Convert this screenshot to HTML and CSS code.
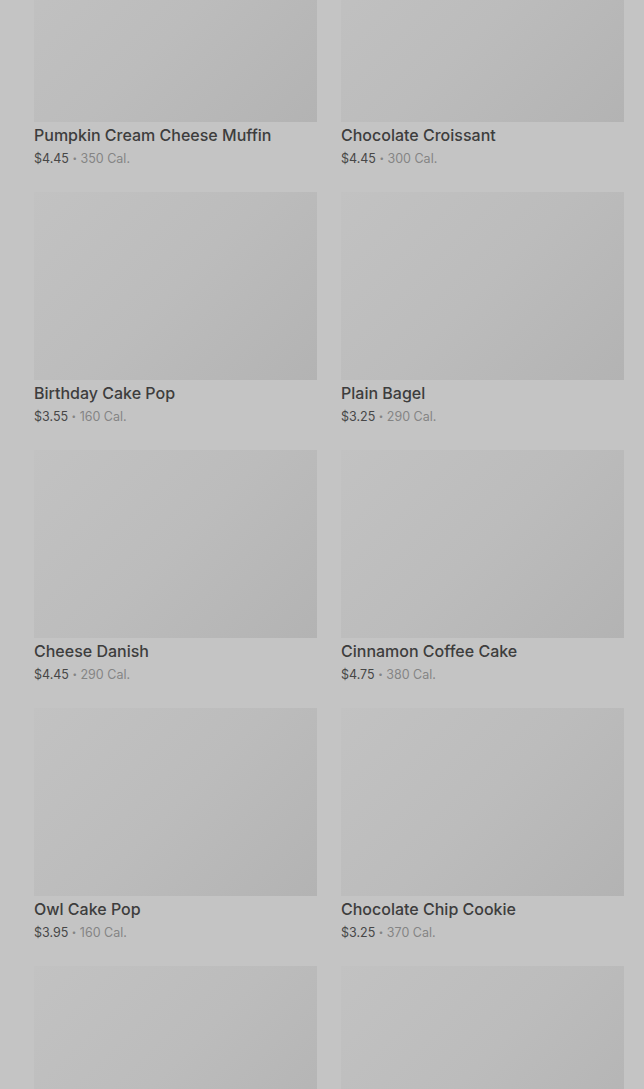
FILE: index.html
```html
<!DOCTYPE html>
<html lang="en">
<head>
    <meta charset="UTF-8">
    <meta name="viewport" content="width=device-width, initial-scale=1.0">
    <title>Bakery Menu</title>
    <link rel="stylesheet" href="styles.css">
</head>
<body>
    <div class="menu-grid">
        <div class="product">
            <div class="product-img"></div>
            <h4 class="product-name">Pumpkin Cream Cheese Muffin</h4>
            <p class="product-meta"><span class="price">$4.45</span> <span class="dot">•</span> <span class="cal">350 Cal.</span></p>
        </div>
        <div class="product">
            <div class="product-img"></div>
            <h4 class="product-name">Chocolate Croissant</h4>
            <p class="product-meta"><span class="price">$4.45</span> <span class="dot">•</span> <span class="cal">300 Cal.</span></p>
        </div>
        <div class="product">
            <div class="product-img"></div>
            <h4 class="product-name">Birthday Cake Pop</h4>
            <p class="product-meta"><span class="price">$3.55</span> <span class="dot">•</span> <span class="cal">160 Cal.</span></p>
        </div>
        <div class="product">
            <div class="product-img"></div>
            <h4 class="product-name">Plain Bagel</h4>
            <p class="product-meta"><span class="price">$3.25</span> <span class="dot">•</span> <span class="cal">290 Cal.</span></p>
        </div>
        <div class="product">
            <div class="product-img"></div>
            <h4 class="product-name">Cheese Danish</h4>
            <p class="product-meta"><span class="price">$4.45</span> <span class="dot">•</span> <span class="cal">290 Cal.</span></p>
        </div>
        <div class="product">
            <div class="product-img"></div>
            <h4 class="product-name">Cinnamon Coffee Cake</h4>
            <p class="product-meta"><span class="price">$4.75</span> <span class="dot">•</span> <span class="cal">380 Cal.</span></p>
        </div>
        <div class="product">
            <div class="product-img"></div>
            <h4 class="product-name">Owl Cake Pop</h4>
            <p class="product-meta"><span class="price">$3.95</span> <span class="dot">•</span> <span class="cal">160 Cal.</span></p>
        </div>
        <div class="product">
            <div class="product-img"></div>
            <h4 class="product-name">Chocolate Chip Cookie</h4>
            <p class="product-meta"><span class="price">$3.25</span> <span class="dot">•</span> <span class="cal">370 Cal.</span></p>
        </div>
        <div class="product">
            <div class="product-img"></div>
        </div>
        <div class="product">
            <div class="product-img"></div>
        </div>
    </div>
</body>
</html>
```

FILE: styles.css
```css
body {
    font-family: Inter, "Liberation Sans", sans-serif;
    background-color: #c4c4c4;
    margin: 0;
    padding: 0;
    overflow: hidden;
}
.menu-grid {
    display: grid;
    grid-template-columns: 283px 283px;
    column-gap: 24px;
    row-gap: 22px;
    margin-top: -66px;
    padding: 0 20px 0 34px;
}
.product-img {
    height: 188px;
    background: linear-gradient(135deg, #c2c2c2 0%, #bcbcbc 50%, #b3b3b3 100%);
}
.product-name {
    margin: 2px 0 0;
    font-size: 16px;
    font-weight: 500;
    line-height: 22px;
    color: #3d3d3d;
}
.product-meta {
    margin: 2px 0 0;
    font-size: 12.5px;
    line-height: 22px;
    height: 22px;
    color: #848484;
}
.price {
    color: #474747;
}
.dot {
    font-size: 8px;
    line-height: 1;
    vertical-align: 2px;
}
```
